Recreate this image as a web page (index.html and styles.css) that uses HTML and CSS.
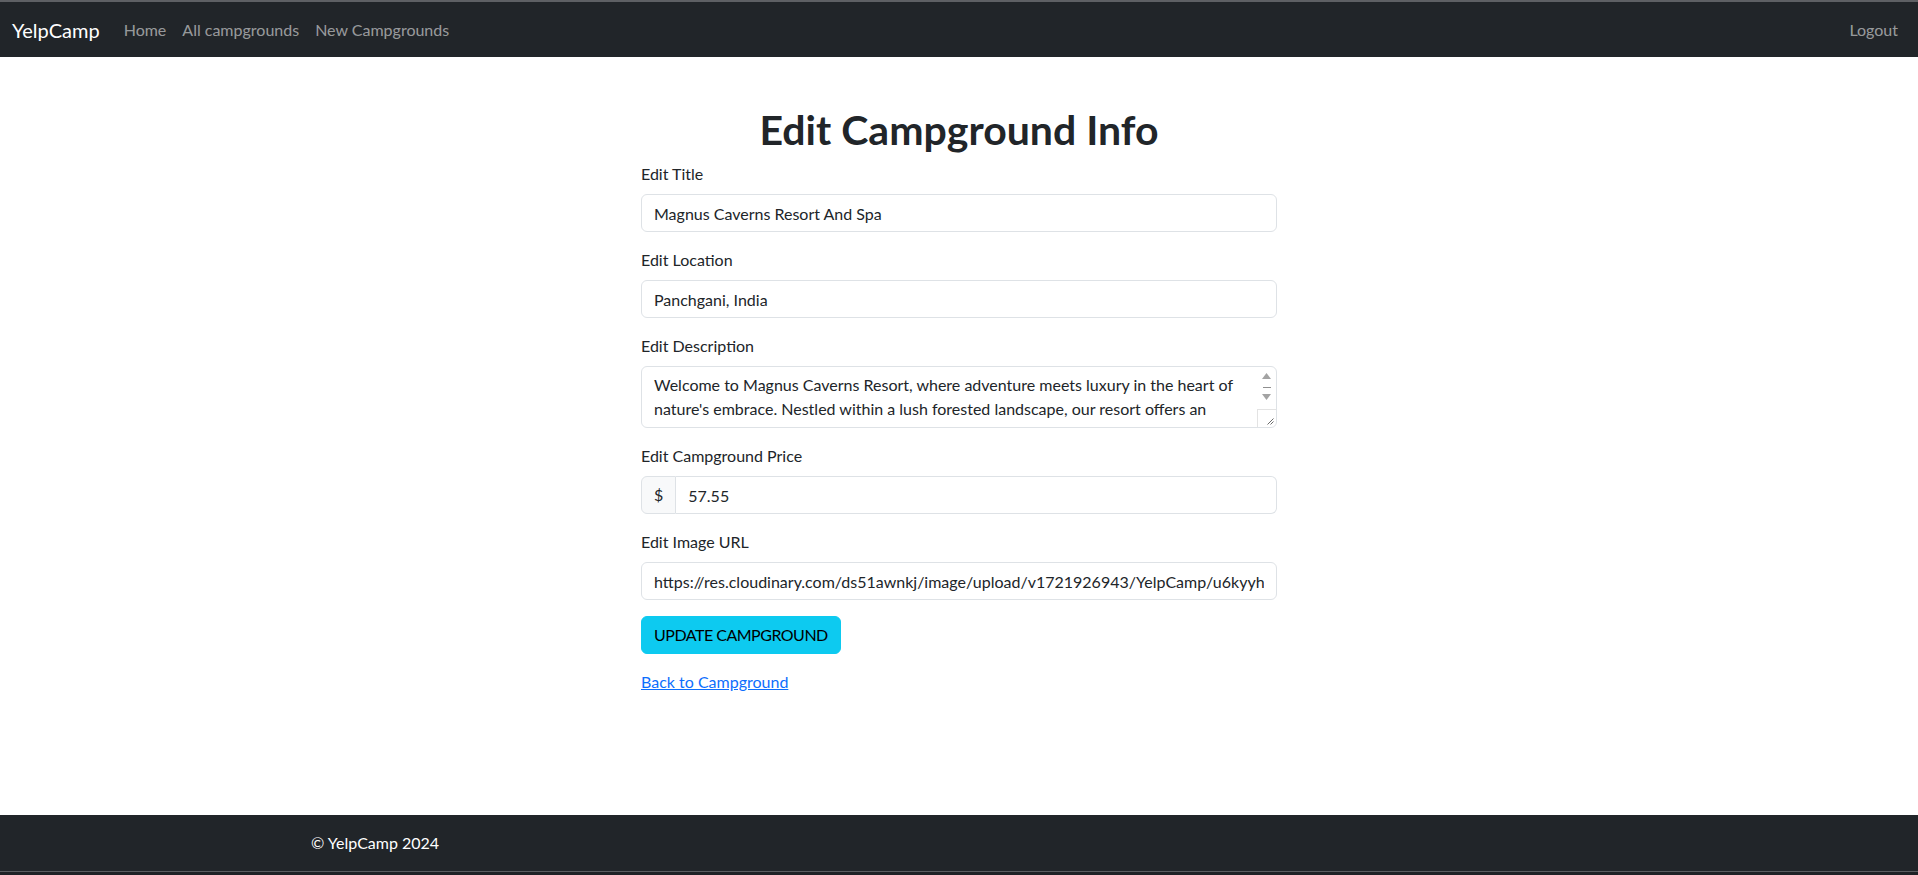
FILE: index.html
```html
<!DOCTYPE html>
<html lang="en">
<head>
<meta charset="utf-8">
<title>YelpCamp</title>
<link rel="stylesheet" href="styles.css">
</head>
<body>
<nav class="navbar">
  <div class="navbar-inner">
    <a class="brand" href="#">YelpCamp</a>
    <div class="nav-links">
      <a class="nav-link" href="#">Home</a>
      <a class="nav-link" href="#">All campgrounds</a>
      <a class="nav-link" href="#">New Campgrounds</a>
    </div>
    <div class="nav-right">
      <a class="nav-link" href="#">Logout</a>
    </div>
  </div>
</nav>

<main class="main">
  <div class="form-col">
    <h1 class="title">Edit Campground Info</h1>
    <form class="form">
      <div class="field">
        <label class="label" for="title">Edit Title</label>
        <input class="control" type="text" id="title" value="Magnus Caverns Resort And Spa">
      </div>
      <div class="field">
        <label class="label" for="location">Edit Location</label>
        <input class="control" type="text" id="location" value="Panchgani, India">
      </div>
      <div class="field">
        <label class="label" for="description">Edit Description</label>
        <div class="textarea-wrap">
          <textarea class="control textarea" id="description" rows="2">Welcome to Magnus Caverns Resort, where adventure meets luxury in the heart of nature's embrace. Nestled within a lush forested landscape, our resort offers an unforgettable escape for travelers seeking tranquility, comfort and a touch of the wild.</textarea>
          <div class="fake-scroll">
            <svg class="arrow" width="9" height="6" viewBox="0 0 9 6"><path d="M4.5 0 L9 6 L0 6 Z" fill="#a3a3a3"/></svg>
            <span class="thumb-line"></span>
            <svg class="arrow" width="9" height="6" viewBox="0 0 9 6"><path d="M0 0 L9 0 L4.5 6 Z" fill="#a3a3a3"/></svg>
            <div class="resizer">
              <svg width="8" height="8" viewBox="0 0 8 8"><path d="M7.5 1.5 L1.5 7.5 M7.5 4.5 L4.5 7.5" stroke="#6b6b6b" stroke-width="1"/></svg>
            </div>
          </div>
        </div>
      </div>
      <div class="field">
        <label class="label" for="price">Edit Campground Price</label>
        <div class="input-group">
          <span class="addon">$</span>
          <input class="control group-control" type="text" id="price" value="57.55">
        </div>
      </div>
      <div class="field">
        <label class="label" for="image">Edit Image URL</label>
        <input class="control" type="text" id="image" value="https://res.cloudinary.com/ds51awnkj/image/upload/v1721926943/YelpCamp/u6kyyhaqz1ybvgyhcwnx.jpg">
      </div>
      <div class="field">
        <button class="btn" type="button">UPDATE CAMPGROUND</button>
      </div>
    </form>
    <a class="back-link" href="#">Back to Campground</a>
  </div>
</main>

<footer class="footer">
  <div class="footer-inner">
    <span class="footer-text">© YelpCamp 2024</span>
  </div>
</footer>
</body>
</html>
```
FILE: styles.css
```css
*, *::before, *::after { box-sizing: border-box; }

html, body { height: 100%; }

body {
  margin: 0;
  min-height: 100vh;
  display: flex;
  flex-direction: column;
  font-family: Lato, "Noto Sans", sans-serif;
  font-size: 16px;
  line-height: 1.5;
  color: #212529;
  background: #fff;
}

a { text-decoration: none; }

/* Navbar */
.navbar {
  background: #212529;
  border-top: 2px solid #5e6064;
  height: 57px;
  flex: none;
}
.navbar-inner {
  height: 100%;
  display: flex;
  align-items: center;
  padding: 0 12px;
}
.brand {
  color: #fff;
  font-size: 20px;
  line-height: 30px;
  margin-right: 16px;
  padding: 5px 0;
}
.nav-links {
  display: flex;
  flex: 1;
}
.nav-link {
  color: rgba(255, 255, 255, 0.55);
  padding: 8px;
  font-size: 16px;
}
.nav-right { display: flex; }

/* Main */
.main {
  flex: 1;
  padding: 0 12px;
  margin-top: 49px;
}
.form-col {
  width: 636px;
  margin: 0 auto;
}
.title {
  margin: 0 0 8px;
  text-align: center;
  font-size: 41px;
  line-height: 48px;
  font-weight: 700;
  color: #212529;
}
.form { margin: 0; }
.field { margin-bottom: 16px; }
.label {
  display: inline-block;
  margin-bottom: 8px;
  font-size: 16px;
  line-height: 24px;
}
.control {
  display: block;
  width: 100%;
  height: 38px;
  padding: 6px 12px;
  font-family: inherit;
  font-size: 16px;
  line-height: 24px;
  color: #212529;
  background: #fff;
  border: 1px solid #dee2e6;
  border-radius: 6px;
  outline: none;
}

.textarea-wrap { position: relative; }
.textarea {
  height: 62px;
  resize: none;
  overflow: hidden;
  padding-right: 30px;
}
.fake-scroll {
  position: absolute;
  top: 1px;
  right: 1px;
  bottom: 1px;
  width: 19px;
  display: flex;
  flex-direction: column;
  align-items: center;
  padding-top: 6px;
  border-radius: 0 5px 5px 0;
}
.arrow { display: block; }
.thumb-line {
  display: block;
  width: 8px;
  height: 1px;
  background: #8f8f8f;
  margin: 8px 0 6px;
}
.resizer {
  margin-top: auto;
  width: 19px;
  height: 18px;
  border-left: 1px solid #e3e3e3;
  border-top: 1px solid #e3e3e3;
  display: flex;
  align-items: flex-end;
  justify-content: flex-end;
  padding: 0 2px 2px 0;
}
.resizer svg { display: block; }

.input-group {
  display: flex;
}
.addon {
  display: flex;
  align-items: center;
  padding: 6px 12px;
  font-size: 16px;
  line-height: 24px;
  color: #212529;
  background: #f8f9fa;
  border: 1px solid #dee2e6;
  border-radius: 6px 0 0 6px;
}
.group-control {
  flex: 1;
  width: auto;
  border-left: 0;
  border-radius: 0 6px 6px 0;
}

.btn {
  display: inline-block;
  height: 38px;
  padding: 6px 12px;
  font-family: inherit;
  font-size: 16px;
  line-height: 24px;
  letter-spacing: -0.5px;
  color: #000;
  background: #0dcaf0;
  border: 1px solid #0dcaf0;
  border-radius: 6px;
  cursor: pointer;
}

.back-link {
  color: #0d6efd;
  text-decoration: underline;
  font-size: 16px;
  line-height: 24px;
}

/* Footer */
.footer {
  flex: none;
  margin-top: auto;
  background: #212529;
  padding-top: 16px;
}
.footer::after {
  content: "";
  display: block;
  margin-top: 16px;
  height: 4px;
  border-top: 1px solid #5a5c60;
  background: #1e2125;
}
.footer-inner {
  max-width: 1320px;
  margin: 0 auto;
  padding: 0 12px;
}
.footer-text {
  color: #fff;
  font-size: 16px;
  line-height: 24px;
}
```
